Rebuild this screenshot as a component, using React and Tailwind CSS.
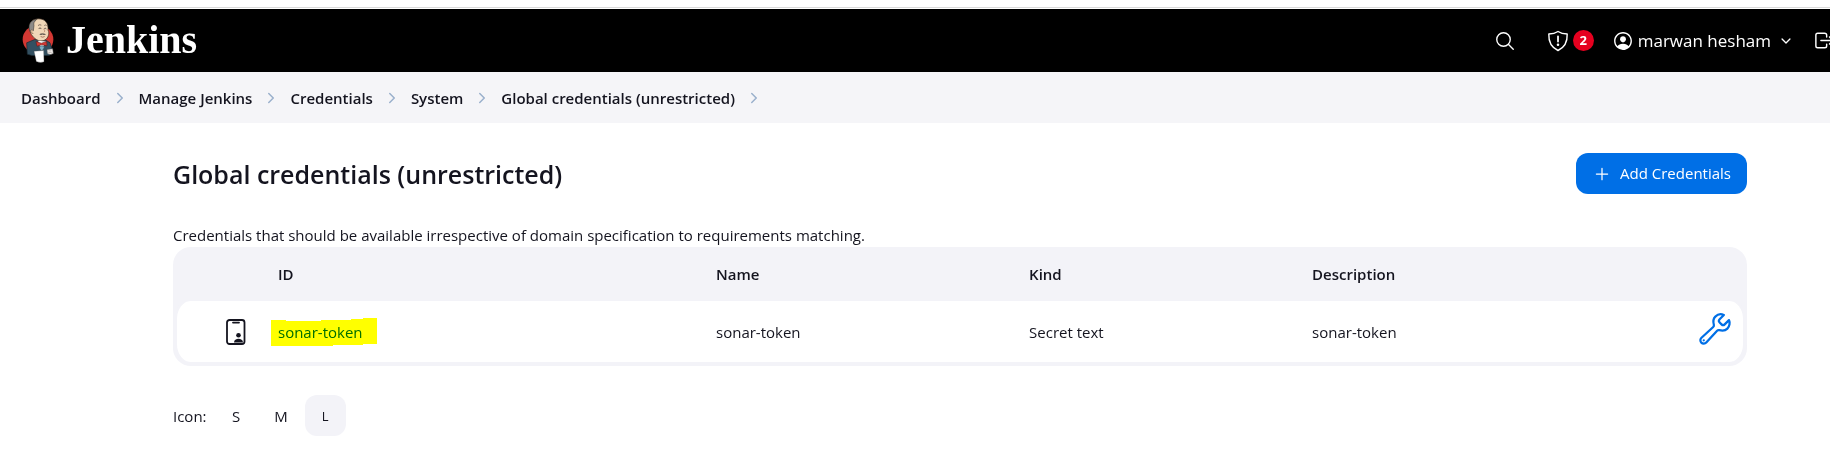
import React from 'react';
import {
  IoSearchOutline,
  IoPersonCircleOutline,
  IoChevronDownOutline,
  IoChevronForwardOutline,
  IoLogOutOutline,
  IoAddOutline,
  IoBuildOutline,
} from 'react-icons/io5';

const crumbs = ['Dashboard', 'Manage Jenkins', 'Credentials', 'System', 'Global credentials (unrestricted)'];

const rows = [{ id: 'sonar-token', name: 'sonar-token', kind: 'Secret text', description: 'sonar-token' }];

function Butler() {
  return (
    <svg viewBox="36 24 96 134" className="h-[45px] w-8" aria-hidden="true">
      <ellipse cx="84" cy="88" rx="46" ry="43" fill="#d33833" />
      <path d="M50 98 L74 88 L108 90 L120 98 L126 116 L118 136 L66 136 L52 132 Z" fill="#335061" stroke="#1a2a33" strokeWidth="2" />
      <path d="M60 64 C54 44 62 26 86 26 C106 26 116 40 114 60 C118 66 116 72 115 76 C112 88 100 94 88 92 C74 88 64 76 60 64 Z" fill="#f0d6b7" stroke="#3a2a20" strokeWidth="2" />
      <path d="M58 58 C54 40 66 28 80 28 C72 34 70 40 72 46 L70 62 L62 64 Z" fill="#8d8a88" stroke="#2a2422" strokeWidth="1.5" />
      <path d="M68 60 c-6 -4 -8 4 -3 9 l5 1" fill="#e4c39f" stroke="#5a3a2a" strokeWidth="1.5" />
      <path d="M84 46 q5 -4 10 -1 M103 46 q4 -3 7 0" fill="none" stroke="#4a3a33" strokeWidth="2" />
      <path d="M86 55 q4 -3 8 0 M103 55 q3 -2 6 1" fill="none" stroke="#2a2020" strokeWidth="2.2" />
      <path d="M101 56 q7 8 1 10" fill="none" stroke="#a36f57" strokeWidth="1.8" />
      <path d="M88 72 q8 -5 20 0 q-6 5 -11 1 q-4 4 -9 -1" fill="#6e6258" />
      <path d="M92 79 q6 4 12 0" fill="none" stroke="#7a3a30" strokeWidth="1.8" />
      <path d="M84 92 L94 120 L108 94 Z" fill="#f7f7f7" />
      <path d="M78 94 L94 99 L110 94 L111 107 L95 104 L81 108 Z" fill="#d33833" stroke="#5a1512" strokeWidth="1.5" />
      <path d="M88 110 q8 -6 15 0 q-2 10 -8 12 q-6 -4 -7 -12" fill="#81b0c4" stroke="#335061" strokeWidth="1.5" />
      <path d="M72 123 L101 121 L102 155 Q91 159 79 154 Z" fill="#fff" stroke="#555" strokeWidth="1" />
      <path d="M111 118 L128 116 L130 130 Q121 136 112 130 Z" fill="#f4f1ee" stroke="#555" strokeWidth="1.5" />
      <path d="M115 122 h9 M115 127 h10" stroke="#9a8f88" strokeWidth="1.5" />
    </svg>
  );
}

function Shield() {
  return (
    <svg viewBox="0 0 22 22" className="size-[22px]" fill="none" stroke="currentColor" strokeWidth="1.4" strokeLinejoin="round" strokeLinecap="round" aria-hidden="true">
      <path d="M11 1.5 C8.5 3.2 5 4 1.8 4 C1.5 11.5 4.5 17.5 11 20.5 C17.5 17.5 20.5 11.5 20.2 4 C17 4 13.5 3.2 11 1.5 Z" />
      <path d="M11 6.5 V11.5" strokeWidth="1.8" />
      <circle cx="11" cy="14.8" r="0.6" fill="currentColor" />
    </svg>
  );
}

function Badge() {
  return (
    <svg viewBox="0 0 20 26" className="h-[26px] w-5" fill="none" stroke="currentColor" aria-hidden="true">
      <rect x="1" y="1" width="17.5" height="24" rx="2.5" strokeWidth="1.8" />
      <path d="M7 3.6 H13" strokeWidth="1.8" strokeLinecap="round" />
      <circle cx="12.5" cy="16.2" r="2.3" fill="currentColor" stroke="none" />
      <path d="M8 23.4 C8 18.4 17 18.4 17 23.4 Z" fill="currentColor" stroke="none" />
    </svg>
  );
}

function Header() {
  return (
    <header className="flex h-[63px] items-center bg-black pl-[22px] text-white">
      <a href="#" className="flex items-center gap-3">
        <Butler />
        <span className="pb-[2px] font-['Liberation_Serif',serif] text-[40px] leading-[44px] font-bold">Jenkins</span>
      </a>
      <div className="ml-auto flex items-center">
        <button aria-label="Search" className="mr-[31px]">
          <IoSearchOutline className="size-[22px]" />
        </button>
        <a href="#" aria-label="Security warnings" className="mr-[18px] flex items-center gap-1">
          <Shield />
          <span className="flex size-[21px] items-center justify-center rounded-full bg-[#e6001f] text-[13px] font-bold">2</span>
        </a>
        <a href="#" className="flex items-center gap-1 text-[17px]">
          <IoPersonCircleOutline className="size-[22px]" />
          marwan hesham
        </a>
        <button aria-label="User menu" className="mr-[20px] ml-2">
          <IoChevronDownOutline className="size-[14px]" />
        </button>
        <a href="#" aria-label="Log out" className="w-[17px] overflow-hidden">
          <IoLogOutOutline className="size-[23px]" />
        </a>
      </div>
    </header>
  );
}

export default function App() {
  return (
    <div className="bg-white font-['Open_Sans','Noto_Sans',sans-serif] text-[15px] text-[#14141f]">
      <div className="h-[9px] border-b border-white bg-white">
        <div className="h-2 border-b border-[#d9d9d9]" />
      </div>
      <Header />
      <nav aria-label="Breadcrumb" className="flex h-[51px] items-center bg-[#f5f5f8] px-[21px] pt-px">
        <ol className="flex items-center font-semibold">
          {crumbs.map((crumb) => (
            <li key={crumb} className="flex items-center">
              <a href="#">{crumb}</a>
              <IoChevronForwardOutline className="mx-[11px] size-4 text-[#9ab0cc]" />
            </li>
          ))}
        </ol>
      </nav>
      <main className="pt-[30px] pr-[83px] pl-[173px]">
        <div className="flex items-center justify-between">
          <h1 className="text-[25px] leading-8 font-semibold">Global credentials (unrestricted)</h1>
          <a href="#" className="flex h-[41px] items-center gap-2 rounded-xl bg-[#006fe6] px-4 text-white">
            <IoAddOutline className="size-5" />
            Add Credentials
          </a>
        </div>
        <p className="mt-[30px] mb-px leading-[22px]">
          Credentials that should be available irrespective of domain specification to requirements matching.
        </p>
        <div className="rounded-[18px] bg-[#f3f3f8] pb-1">
          <table className="w-full table-fixed border-separate border-spacing-0 text-left">
            <colgroup>
              <col className="w-[6.67%]" />
              <col className="w-[27.83%]" />
              <col className="w-[19.89%]" />
              <col className="w-[17.98%]" />
              <col />
              <col className="w-16" />
            </colgroup>
            <thead>
              <tr className="h-[54px]">
                <th aria-label="Icon" />
                <th className="font-semibold">ID</th>
                <th className="font-semibold">Name</th>
                <th className="font-semibold">Kind</th>
                <th className="font-semibold">Description</th>
                <th aria-label="Actions" />
              </tr>
            </thead>
            <tbody>
              {rows.map((row) => (
                <tr key={row.id} className="h-[61px]">
                  <td className="rounded-l-[18px] border-l-4 border-[#f3f3f8] bg-white pl-[49px]">
                    <Badge />
                  </td>
                  <td className="bg-white pt-[2px]">
                    <a href="#" className="relative inline-block text-[#006fe6]">
                      {row.id}
                      <svg viewBox="0 0 106 28" className="absolute -top-[3px] -left-[7px] h-7 w-[106px] max-w-none mix-blend-multiply" aria-hidden="true">
                        <path d="M0 2 H15 V3 H50 V2 H80 V1 H92 V0 H106 V26 H92 V27 H62 V28 H0 Z" fill="#ffff00" />
                      </svg>
                    </a>
                  </td>
                  <td className="bg-white pt-[2px]">{row.name}</td>
                  <td className="bg-white pt-[2px]">{row.kind}</td>
                  <td className="bg-white pt-[2px]">{row.description}</td>
                  <td className="rounded-r-[18px] border-r-4 border-[#f3f3f8] bg-white">
                    <a href="#" aria-label="Update" className="mr-[10px] mb-[6px] flex justify-end text-[#006fe6]">
                      <IoBuildOutline className="size-9" />
                    </a>
                  </td>
                </tr>
              ))}
            </tbody>
          </table>
        </div>
        <div className="mt-[29px] flex items-center">
          <span className="mr-2 pt-[2px]">Icon:</span>
          <button className="h-[41px] w-[43px] pt-[2px]">S</button>
          <button className="h-[41px] w-[47px] pt-[2px]">M</button>
          <button aria-pressed="true" className="size-[41px] rounded-xl bg-[#f3f3f8] pt-[2px] text-[13px]">L</button>
        </div>
      </main>
    </div>
  );
}
